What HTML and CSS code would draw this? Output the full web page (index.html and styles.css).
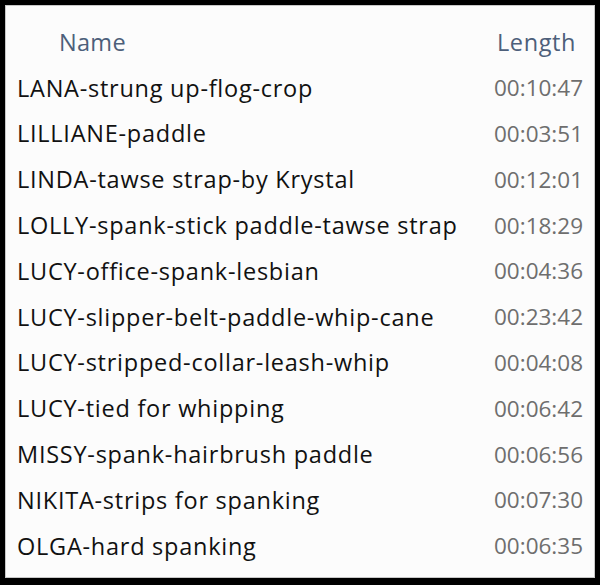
FILE: index.html
```html
<html lang="en">
<head>
    <meta charset="UTF-8">
    <title>Length</title>
    <link rel="stylesheet" href="styles.css">
</head>
<body>
<div class="panel">
    <div class="row head">
        <span class="name">Name</span>
        <span class="len">Length</span>
    </div>
    <div class="row"><span class="name">LANA-strung up-flog-crop</span><span class="len">00:10:47</span></div>
    <div class="row"><span class="name">LILLIANE-paddle</span><span class="len">00:03:51</span></div>
    <div class="row"><span class="name">LINDA-tawse strap-by Krystal</span><span class="len">00:12:01</span></div>
    <div class="row"><span class="name">LOLLY-spank-stick paddle-tawse strap</span><span class="len">00:18:29</span></div>
    <div class="row"><span class="name">LUCY-office-spank-lesbian</span><span class="len">00:04:36</span></div>
    <div class="row"><span class="name">LUCY-slipper-belt-paddle-whip-cane</span><span class="len">00:23:42</span></div>
    <div class="row"><span class="name">LUCY-stripped-collar-leash-whip</span><span class="len">00:04:08</span></div>
    <div class="row"><span class="name">LUCY-tied for whipping</span><span class="len">00:06:42</span></div>
    <div class="row"><span class="name">MISSY-spank-hairbrush paddle</span><span class="len">00:06:56</span></div>
    <div class="row"><span class="name">NIKITA-strips for spanking</span><span class="len">00:07:30</span></div>
    <div class="row"><span class="name">OLGA-hard spanking</span><span class="len">00:06:35</span></div>
</div>
</body>
</html>
```

FILE: styles.css
```css
*{
    margin:0px;
    padding:0px;
}
body{
    background:#000;
    width:600px;
    height:585px;
    overflow:hidden;
    font-family:"Open Sans","Noto Sans",sans-serif;
}
.panel{
    margin:5px;
    height:573px;
    background:#fcfcfc;
    border:1px solid #c8c8c8;
    box-sizing:border-box;
    padding-top:13px;
}
.row{
    display:flex;
    justify-content:space-between;
    align-items:center;
    height:45.8px;
    font-size:23.5px;
    padding:0px 11px 0px 11px;
}
.row .name{
    color:#111;
    letter-spacing:0.75px;
}
.row .len{
    color:#6e6e6e;
    font-size:22.5px;
}
.head .name{
    color:#4d5f7a;
    padding-left:42px;
    letter-spacing:0.3px;
}
.head .len{
    color:#4d5f7a;
    padding-right:7px;
    font-size:23.5px;
    letter-spacing:0.6px;
}
```
